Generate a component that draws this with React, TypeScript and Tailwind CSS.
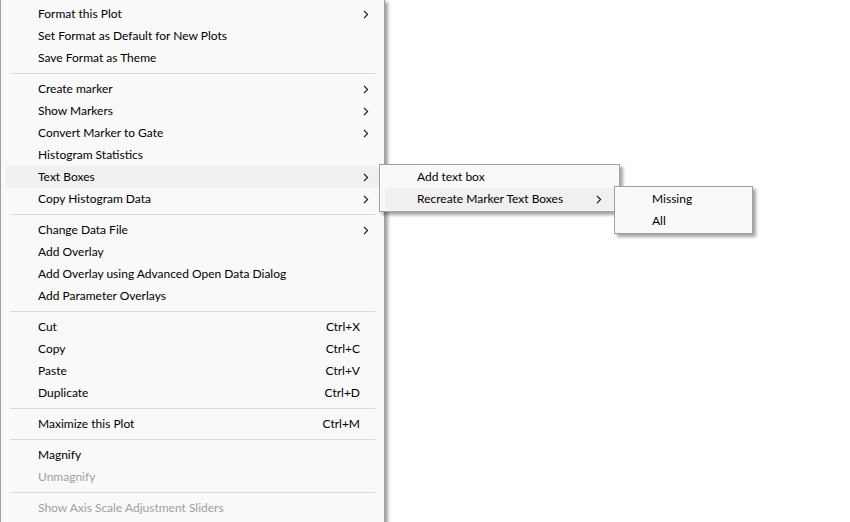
import React from 'react';

type Item =
  | { type: 'sep' }
  | { type?: 'item'; label: string; sub?: boolean; shortcut?: string; disabled?: boolean; active?: boolean };

const mainItems: Item[] = [
  { label: 'Format this Plot', sub: true },
  { label: 'Set Format as Default for New Plots' },
  { label: 'Save Format as Theme' },
  { type: 'sep' },
  { label: 'Create marker', sub: true },
  { label: 'Show Markers', sub: true },
  { label: 'Convert Marker to Gate', sub: true },
  { label: 'Histogram Statistics' },
  { label: 'Text Boxes', sub: true, active: true },
  { label: 'Copy Histogram Data', sub: true },
  { type: 'sep' },
  { label: 'Change Data File', sub: true },
  { label: 'Add Overlay' },
  { label: 'Add Overlay using Advanced Open Data Dialog' },
  { label: 'Add Parameter Overlays' },
  { type: 'sep' },
  { label: 'Cut', shortcut: 'Ctrl+X' },
  { label: 'Copy', shortcut: 'Ctrl+C' },
  { label: 'Paste', shortcut: 'Ctrl+V' },
  { label: 'Duplicate', shortcut: 'Ctrl+D' },
  { type: 'sep' },
  { label: 'Maximize this Plot', shortcut: 'Ctrl+M' },
  { type: 'sep' },
  { label: 'Magnify' },
  { label: 'Unmagnify', disabled: true },
  { type: 'sep' },
  { label: 'Show Axis Scale Adjustment Sliders', disabled: true },
];

const textBoxItems: Item[] = [
  { label: 'Add text box' },
  { label: 'Recreate Marker Text Boxes', sub: true, active: true },
];

const recreateItems: Item[] = [{ label: 'Missing' }, { label: 'All' }];

const Chevron = () => (
  <svg width="6" height="9" viewBox="0 0 6 9" className="shrink-0">
    <polyline points="1,0.8 4.6,4.5 1,8.2" fill="none" stroke="#1a1a1a" strokeWidth="1.2" />
  </svg>
);

const MenuRows: React.FC<{ items: Item[]; chevronPad?: string }> = ({ items, chevronPad = 'pr-[10px]' }) => (
  <>
    {items.map((it, i) =>
      it.type === 'sep' ? (
        <div key={i} className="h-[9px] flex items-center px-[9px]">
          <div className="h-px w-full bg-[#d9d9d9]" />
        </div>
      ) : (
        <div
          key={i}
          className={`mx-[5px] h-[22px] flex items-center pl-[32px] rounded-[4px] ${it.active ? 'bg-[#f0f0f0]' : ''} ${
            it.disabled ? 'text-[#a0a0a0]' : 'text-black'
          } ${it.sub ? chevronPad : 'pr-[19px]'}`}
        >
          <span className="flex-1 whitespace-nowrap">{it.label}</span>
          {it.shortcut && <span className="whitespace-nowrap">{it.shortcut}</span>}
          {it.sub && <Chevron />}
        </div>
      )
    )}
  </>
);

export default function App() {
  return (
    <div
      className="relative w-[850px] h-[522px] bg-white overflow-hidden text-[12px]"
      style={{ fontFamily: '"Segoe UI", Lato, "Liberation Sans", sans-serif' }}
    >
      {/* main context menu */}
      <div className="w-[385px] bg-[#f9f9f9] border-l border-r border-[#a0a0a0] pt-[3px] pb-[4px] shadow-[3px_2px_3px_rgba(0,0,0,0.35)]">
        <MenuRows items={mainItems} />
      </div>

      {/* Text Boxes submenu */}
      <div className="absolute left-[379px] top-[164px] w-[241px] bg-[#f9f9f9] border border-[#a0a0a0] py-[1px] shadow-[3px_3px_3px_rgba(0,0,0,0.35)] z-10">
        <MenuRows items={textBoxItems} chevronPad="pr-[12px]" />
      </div>

      {/* Recreate submenu */}
      <div className="absolute left-[614px] top-[186px] w-[139px] bg-[#f9f9f9] border border-[#a0a0a0] py-[1px] shadow-[3px_3px_3px_rgba(0,0,0,0.35)] z-20">
        <MenuRows items={recreateItems} />
      </div>
    </div>
  );
}
